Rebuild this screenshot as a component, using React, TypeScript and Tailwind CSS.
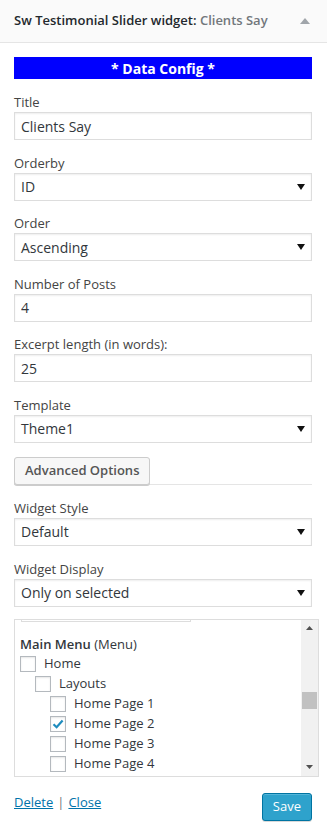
import { useState } from "react"

type Field = {
  label: string
  value: string
  select?: boolean
}

const topFields: Field[] = [
  { label: "Title", value: "Clients Say" },
  { label: "Orderby", value: "ID", select: true },
  { label: "Order", value: "Ascending", select: true },
  { label: "Number of Posts", value: "4" },
  { label: "Excerpt length (in words):", value: "25" },
  { label: "Template", value: "Theme1", select: true },
]

const bottomFields: Field[] = [
  { label: "Widget Style", value: "Default", select: true },
  { label: "Widget Display", value: "Only on selected", select: true },
]

type MenuItem = {
  name: string
  depth: number
  checked: boolean
}

const menuItems: MenuItem[] = [
  { name: "Home", depth: 0, checked: false },
  { name: "Layouts", depth: 1, checked: false },
  { name: "Home Page 1", depth: 2, checked: false },
  { name: "Home Page 2", depth: 2, checked: true },
  { name: "Home Page 3", depth: 2, checked: false },
  { name: "Home Page 4", depth: 2, checked: false },
]

function SelectArrow() {
  return (
    <svg width="8" height="6" viewBox="0 0 8 6" className="shrink-0">
      <path d="M0 0 L8 0 L4 6 Z" fill="#111" />
    </svg>
  )
}

function FormField({ field }: { field: Field }) {
  return (
    <div className="flex flex-col">
      <label className="text-[13px] leading-5 text-[#444]">{field.label}</label>
      {field.select ? (
        <div className="h-[28px] flex items-center justify-between pl-[6px] pr-[6px] border border-[#ddd] bg-white shadow-[inset_0_1px_2px_rgba(0,0,0,0.07)] text-[14px] text-[#32373c]">
          <span>{field.value}</span>
          <SelectArrow />
        </div>
      ) : (
        <input
          defaultValue={field.value}
          className="h-[28px] px-[6px] border border-[#ddd] bg-white shadow-[inset_0_1px_2px_rgba(0,0,0,0.07)] text-[14px] text-[#32373c] outline-none"
        />
      )}
    </div>
  )
}

function Checkbox({ checked, onClick }: { checked: boolean; onClick: () => void }) {
  return (
    <button
      onClick={onClick}
      className="w-[16px] h-[16px] shrink-0 border border-[#b4b9be] bg-white shadow-[inset_0_1px_2px_rgba(0,0,0,0.1)] flex items-center justify-center cursor-pointer"
    >
      {checked && (
        <svg width="14" height="14" viewBox="0 0 14 14">
          <path d="M2.5 7.2 L5.6 10.2 L11.6 3.4" stroke="#1e8cbe" strokeWidth="2.2" fill="none" />
        </svg>
      )}
    </button>
  )
}

export default function App() {
  const [items, setItems] = useState<MenuItem[]>(menuItems)

  const toggle = (idx: number) => {
    setItems((prev) => prev.map((it, i) => (i === idx ? { ...it, checked: !it.checked } : it)))
  }

  return (
    <div className="w-[327px] min-h-[827px] bg-white font-['Open_Sans',sans-serif] text-[#444]">
      {/* widget header */}
      <div className="h-[43px] flex items-center justify-between pl-[14px] pr-[17px] bg-[#fafafa] border-b border-[#e5e5e5]">
        <h3 className="text-[13px] font-semibold text-[#23282d] whitespace-nowrap">
          Sw Testimonial Slider widget: <span className="text-[#72777c]">Clients Say</span>
        </h3>
        <svg width="10" height="6" viewBox="0 0 10 6">
          <path d="M0 6 L10 6 L5 0 Z" fill="#a0a5aa" />
        </svg>
      </div>

      <div className="pl-[14px] pr-[15px] pt-[14px]">
        <div className="h-[22px] bg-[#0000ff] flex items-center justify-center text-white text-[14px] font-bold">
          * Data Config *
        </div>

        <div className="flex flex-col gap-[12.5px] mt-[13px]">
          {topFields.map((f) => (
            <FormField key={f.label} field={f} />
          ))}
        </div>

        <div className="mt-[14px] border-b border-[#e5e5e5] flex">
          <button className="h-[28px] px-[10px] mb-[-1px] rounded-[3px] bg-[#f7f7f7] border border-[#ccc] shadow-[0_1px_0_#ccc] text-[13px] font-semibold text-[#555] cursor-pointer">
            Advanced Options
          </button>
        </div>

        <div className="flex flex-col gap-[13px] mt-[13px]">
          {bottomFields.map((f) => (
            <FormField key={f.label} field={f} />
          ))}
        </div>
      </div>

      {/* menu pages list */}
      <div className="ml-[14px] mr-[8px] mt-[12px] h-[158px] border border-[#ddd] flex overflow-hidden">
        <div className="flex-1 overflow-hidden pl-[5px]">
          <div className="ml-[1px] w-[170px] h-[6px] mt-[-4px] border border-[#ddd]" />
          <p className="mt-[13px] text-[13px] leading-[18px] text-[#32373c]">
            <span className="font-semibold">Main Menu</span> (Menu)
          </p>
          <ul className="mt-[3px] flex flex-col gap-[4px]">
            {items.map((it, i) => (
              <li
                key={it.name}
                className={`flex items-center gap-[8px] h-[16px] text-[13px] text-[#32373c] ${
                  it.depth === 0 ? "pl-0" : it.depth === 1 ? "pl-[15px]" : "pl-[30px]"
                }`}
              >
                <Checkbox checked={it.checked} onClick={() => toggle(i)} />
                <span>{it.name}</span>
              </li>
            ))}
          </ul>
        </div>
        <div className="w-[17px] bg-[#f1f1f1] flex flex-col items-center">
          <div className="h-[17px] flex items-center justify-center">
            <svg width="7" height="4" viewBox="0 0 7 4">
              <path d="M0 4 L7 4 L3.5 0 Z" fill="#505050" />
            </svg>
          </div>
          <div className="flex-1 w-full px-[1px]">
            <div className="mt-[55px] h-[17px] w-full bg-[#c1c1c1]" />
          </div>
          <div className="h-[17px] flex items-center justify-center">
            <svg width="7" height="4" viewBox="0 0 7 4">
              <path d="M0 0 L7 0 L3.5 4 Z" fill="#505050" />
            </svg>
          </div>
        </div>
      </div>

      {/* footer actions */}
      <div className="pl-[14px] pr-[15px] mt-[16px] flex items-start justify-between">
        <div className="text-[13px] leading-[18px] text-[#0073aa] flex items-center gap-[4px]">
          <a href="#" className="underline">Delete</a>
          <span className="text-[#72777c]">|</span>
          <a href="#" className="underline">Close</a>
        </div>
        <button className="h-[28px] px-[10px] rounded-[3px] bg-[#2ea2cc] border border-[#0074a2] shadow-[inset_0_1px_0_rgba(120,200,230,0.5),0_1px_0_rgba(0,0,0,0.15)] text-[13px] text-white cursor-pointer">
          Save
        </button>
      </div>
    </div>
  )
}
